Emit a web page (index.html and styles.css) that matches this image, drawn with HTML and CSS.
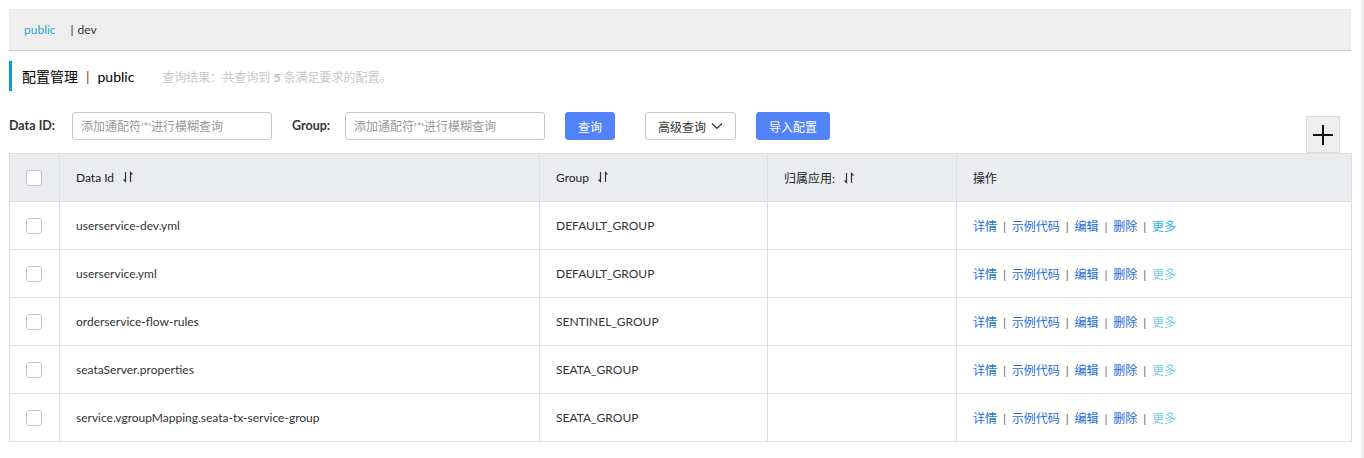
FILE: index.html
```html
<!DOCTYPE html>
<html lang="zh">
<head>
<meta charset="utf-8">
<title>配置管理</title>
<link rel="stylesheet" href="styles.css">
</head>
<body>
<div class="page">
  <main class="main">
    <div class="ns-bar">
      <span class="ns-active">public</span>
      <span class="ns-sep">|</span>
      <span class="ns-item">dev</span>
    </div>

    <div class="title-row">
      <span class="title">配置管理</span>
      <span class="title-sep">|</span>
      <span class="title-ns">public</span>
      <span class="result">查询结果：共查询到 <b>5</b> 条满足要求的配置。</span>
    </div>

    <div class="toolbar">
      <label class="field-label id-label">Data ID:</label>
      <input class="field-input" type="text" placeholder="添加通配符'*'进行模糊查询">
      <label class="field-label group-label">Group:</label>
      <input class="field-input" type="text" placeholder="添加通配符'*'进行模糊查询">
      <button class="btn btn-primary btn-query">查询</button>
      <button class="btn btn-normal btn-adv">高级查询
        <svg class="chev" width="12" height="8" viewBox="0 0 12 8"><path d="M1 1.5 L6 6.5 L11 1.5" fill="none" stroke="#333" stroke-width="1.2"/></svg>
      </button>
      <button class="btn btn-primary btn-import">导入配置</button>
      <button class="btn-plus" aria-label="add">
        <svg width="22" height="22" viewBox="0 0 22 22"><path d="M1 11 H21 M11 1 V21" stroke="#111" stroke-width="2"/></svg>
      </button>
    </div>

    <table class="grid">
      <colgroup>
        <col class="c1"><col class="c2"><col class="c3"><col class="c4"><col class="c5">
      </colgroup>
      <thead>
        <tr>
          <th class="chk-cell"><span class="chk"></span></th>
          <th>Data Id <svg class="sort" width="10" height="12" viewBox="0 0 10 12"><path d="M2.5 1 V10.5 L0.5 8.5 M7.5 11 V1.5 L9.5 3.5" fill="none" stroke="#333" stroke-width="1.2"/></svg></th>
          <th>Group <svg class="sort" width="10" height="12" viewBox="0 0 10 12"><path d="M2.5 1 V10.5 L0.5 8.5 M7.5 11 V1.5 L9.5 3.5" fill="none" stroke="#333" stroke-width="1.2"/></svg></th>
          <th>归属应用: <svg class="sort" width="10" height="12" viewBox="0 0 10 12"><path d="M2.5 1 V10.5 L0.5 8.5 M7.5 11 V1.5 L9.5 3.5" fill="none" stroke="#333" stroke-width="1.2"/></svg></th>
          <th>操作</th>
        </tr>
      </thead>
      <tbody>
        <tr>
          <td class="chk-cell"><span class="chk"></span></td>
          <td>userservice-dev.yml</td>
          <td>DEFAULT_GROUP</td>
          <td></td>
          <td class="ops"><a>详情</a><i>|</i><a>示例代码</a><i>|</i><a>编辑</a><i>|</i><a>删除</a><i>|</i><a class="more more-active">更多</a></td>
        </tr>
        <tr>
          <td class="chk-cell"><span class="chk"></span></td>
          <td>userservice.yml</td>
          <td>DEFAULT_GROUP</td>
          <td></td>
          <td class="ops"><a>详情</a><i>|</i><a>示例代码</a><i>|</i><a>编辑</a><i>|</i><a>删除</a><i>|</i><a class="more">更多</a></td>
        </tr>
        <tr>
          <td class="chk-cell"><span class="chk"></span></td>
          <td>orderservice-flow-rules</td>
          <td>SENTINEL_GROUP</td>
          <td></td>
          <td class="ops"><a>详情</a><i>|</i><a>示例代码</a><i>|</i><a>编辑</a><i>|</i><a>删除</a><i>|</i><a class="more">更多</a></td>
        </tr>
        <tr>
          <td class="chk-cell"><span class="chk"></span></td>
          <td>seataServer.properties</td>
          <td>SEATA_GROUP</td>
          <td></td>
          <td class="ops"><a>详情</a><i>|</i><a>示例代码</a><i>|</i><a>编辑</a><i>|</i><a>删除</a><i>|</i><a class="more">更多</a></td>
        </tr>
        <tr>
          <td class="chk-cell"><span class="chk"></span></td>
          <td>service.vgroupMapping.seata-tx-service-group</td>
          <td>SEATA_GROUP</td>
          <td></td>
          <td class="ops"><a>详情</a><i>|</i><a>示例代码</a><i>|</i><a>编辑</a><i>|</i><a>删除</a><i>|</i><a class="more">更多</a></td>
        </tr>
      </tbody>
    </table>
  </main>
  <div class="scroll-strip"></div>
</div>
</body>
</html>
```

FILE: styles.css
```css
* { box-sizing: border-box; }
html, body { margin: 0; padding: 0; background: #fff; }
body {
  font-family: "Lato", "Noto Sans CJK SC", sans-serif;
  font-size: 12px;
  color: #333;
  height: 458px;
  overflow: hidden;
}
.page {
  display: flex;
  height: 458px;
}
.main {
  flex: 1;
  padding: 9px 0 0 9px;
  min-width: 0;
}
.scroll-strip {
  width: 3px;
  margin-left: 10px;
  background: #f1f1f1;
}

/* namespace bar */
.ns-bar {
  height: 42px;
  background: #eee;
  border-bottom: 1px solid #ccc;
  display: flex;
  align-items: center;
  padding-left: 15px;
  font-size: 12px;
}
.ns-active { color: #2fa6cf; }
.ns-sep { color: #1c1c5a; margin-left: 15px; margin-right: 4px; }
.ns-item { color: #333; }

/* title */
.title-row {
  margin-top: 10px;
  height: 30px;
  border-left: 3px solid #0d9ad4;
  display: flex;
  align-items: center;
  padding-left: 10px;
  font-size: 14px;
  color: #000;
}
.title-sep { margin: 0 8px; color: #7a4a00; }
.result {
  margin-left: 28px;
  font-size: 12px;
  color: #c8c8c8;
}
.result b { font-weight: bold; color: #bdbdbd; }

/* toolbar */
.toolbar {
  margin-top: 21px;
  display: flex;
  align-items: flex-start;
}
.field-label {
  font-weight: bold;
  font-size: 12.5px;
  color: #333;
  line-height: 28px;
}
.id-label { width: 63px; }
.group-label { margin-left: 20px; width: 53px; }
.field-input {
  width: 200px;
  height: 28px;
  border: 1px solid #c4c6cf;
  border-radius: 3px;
  padding: 0 8px;
  font-family: inherit;
  font-size: 12px;
  outline: none;
}
.field-input::placeholder { color: #999; }
.btn {
  height: 28px;
  border-radius: 3px;
  font-family: inherit;
  font-size: 12px;
  padding: 0;
  cursor: pointer;
}
.btn-primary {
  background: #5283fa;
  border: 1px solid #5283fa;
  color: #fff;
}
.btn-normal {
  background: #fff;
  border: 1px solid #c4c6cf;
  color: #333;
  display: flex;
  align-items: center;
  justify-content: center;
  gap: 5px;
}
.btn-query { width: 50px; margin-left: 20px; }
.btn-adv { width: 91px; margin-left: 30px; }
.btn-import { width: 74px; margin-left: 20px; }
.chev { display: block; }
.btn-plus {
  margin-left: auto;
  margin-right: 11px;
  margin-top: 4px;
  width: 34px;
  height: 37px;
  background: #eee;
  border: 1px solid #ddd;
  display: flex;
  align-items: center;
  justify-content: center;
  padding: 0;
}

/* table */
.grid {
  width: 1342px;
  border-collapse: collapse;
  table-layout: fixed;
  border: 1px solid #dcdee3;
}
.c1 { width: 50px; }
.c2 { width: 480px; }
.c3 { width: 228px; }
.c4 { width: 189px; }
.c5 { width: 395px; }
.grid th, .grid td {
  border: 1px solid #dcdee3;
  text-align: left;
  padding: 0 16px;
  height: 48px;
  font-weight: normal;
  font-size: 12px;
  color: #333;
  white-space: nowrap;
}
.grid thead th { background: #ebecf0; color: #222; }
.grid .chk-cell { padding: 0 0 0 16px; }
.chk {
  display: block;
  width: 16px;
  height: 16px;
  border: 1px solid #c4c6cf;
  border-radius: 3px;
  background: #fff;
}
.sort { vertical-align: -1px; margin-left: 6px; }
.ops a { color: #1a6cd3; }
.ops i {
  display: inline-block;
  width: 14.75px;
  text-align: center;
  font-style: normal;
  color: #666;
}
.ops .more { color: #7ccbe6; }
.ops .more-active { color: #2fb2e6; }
```
